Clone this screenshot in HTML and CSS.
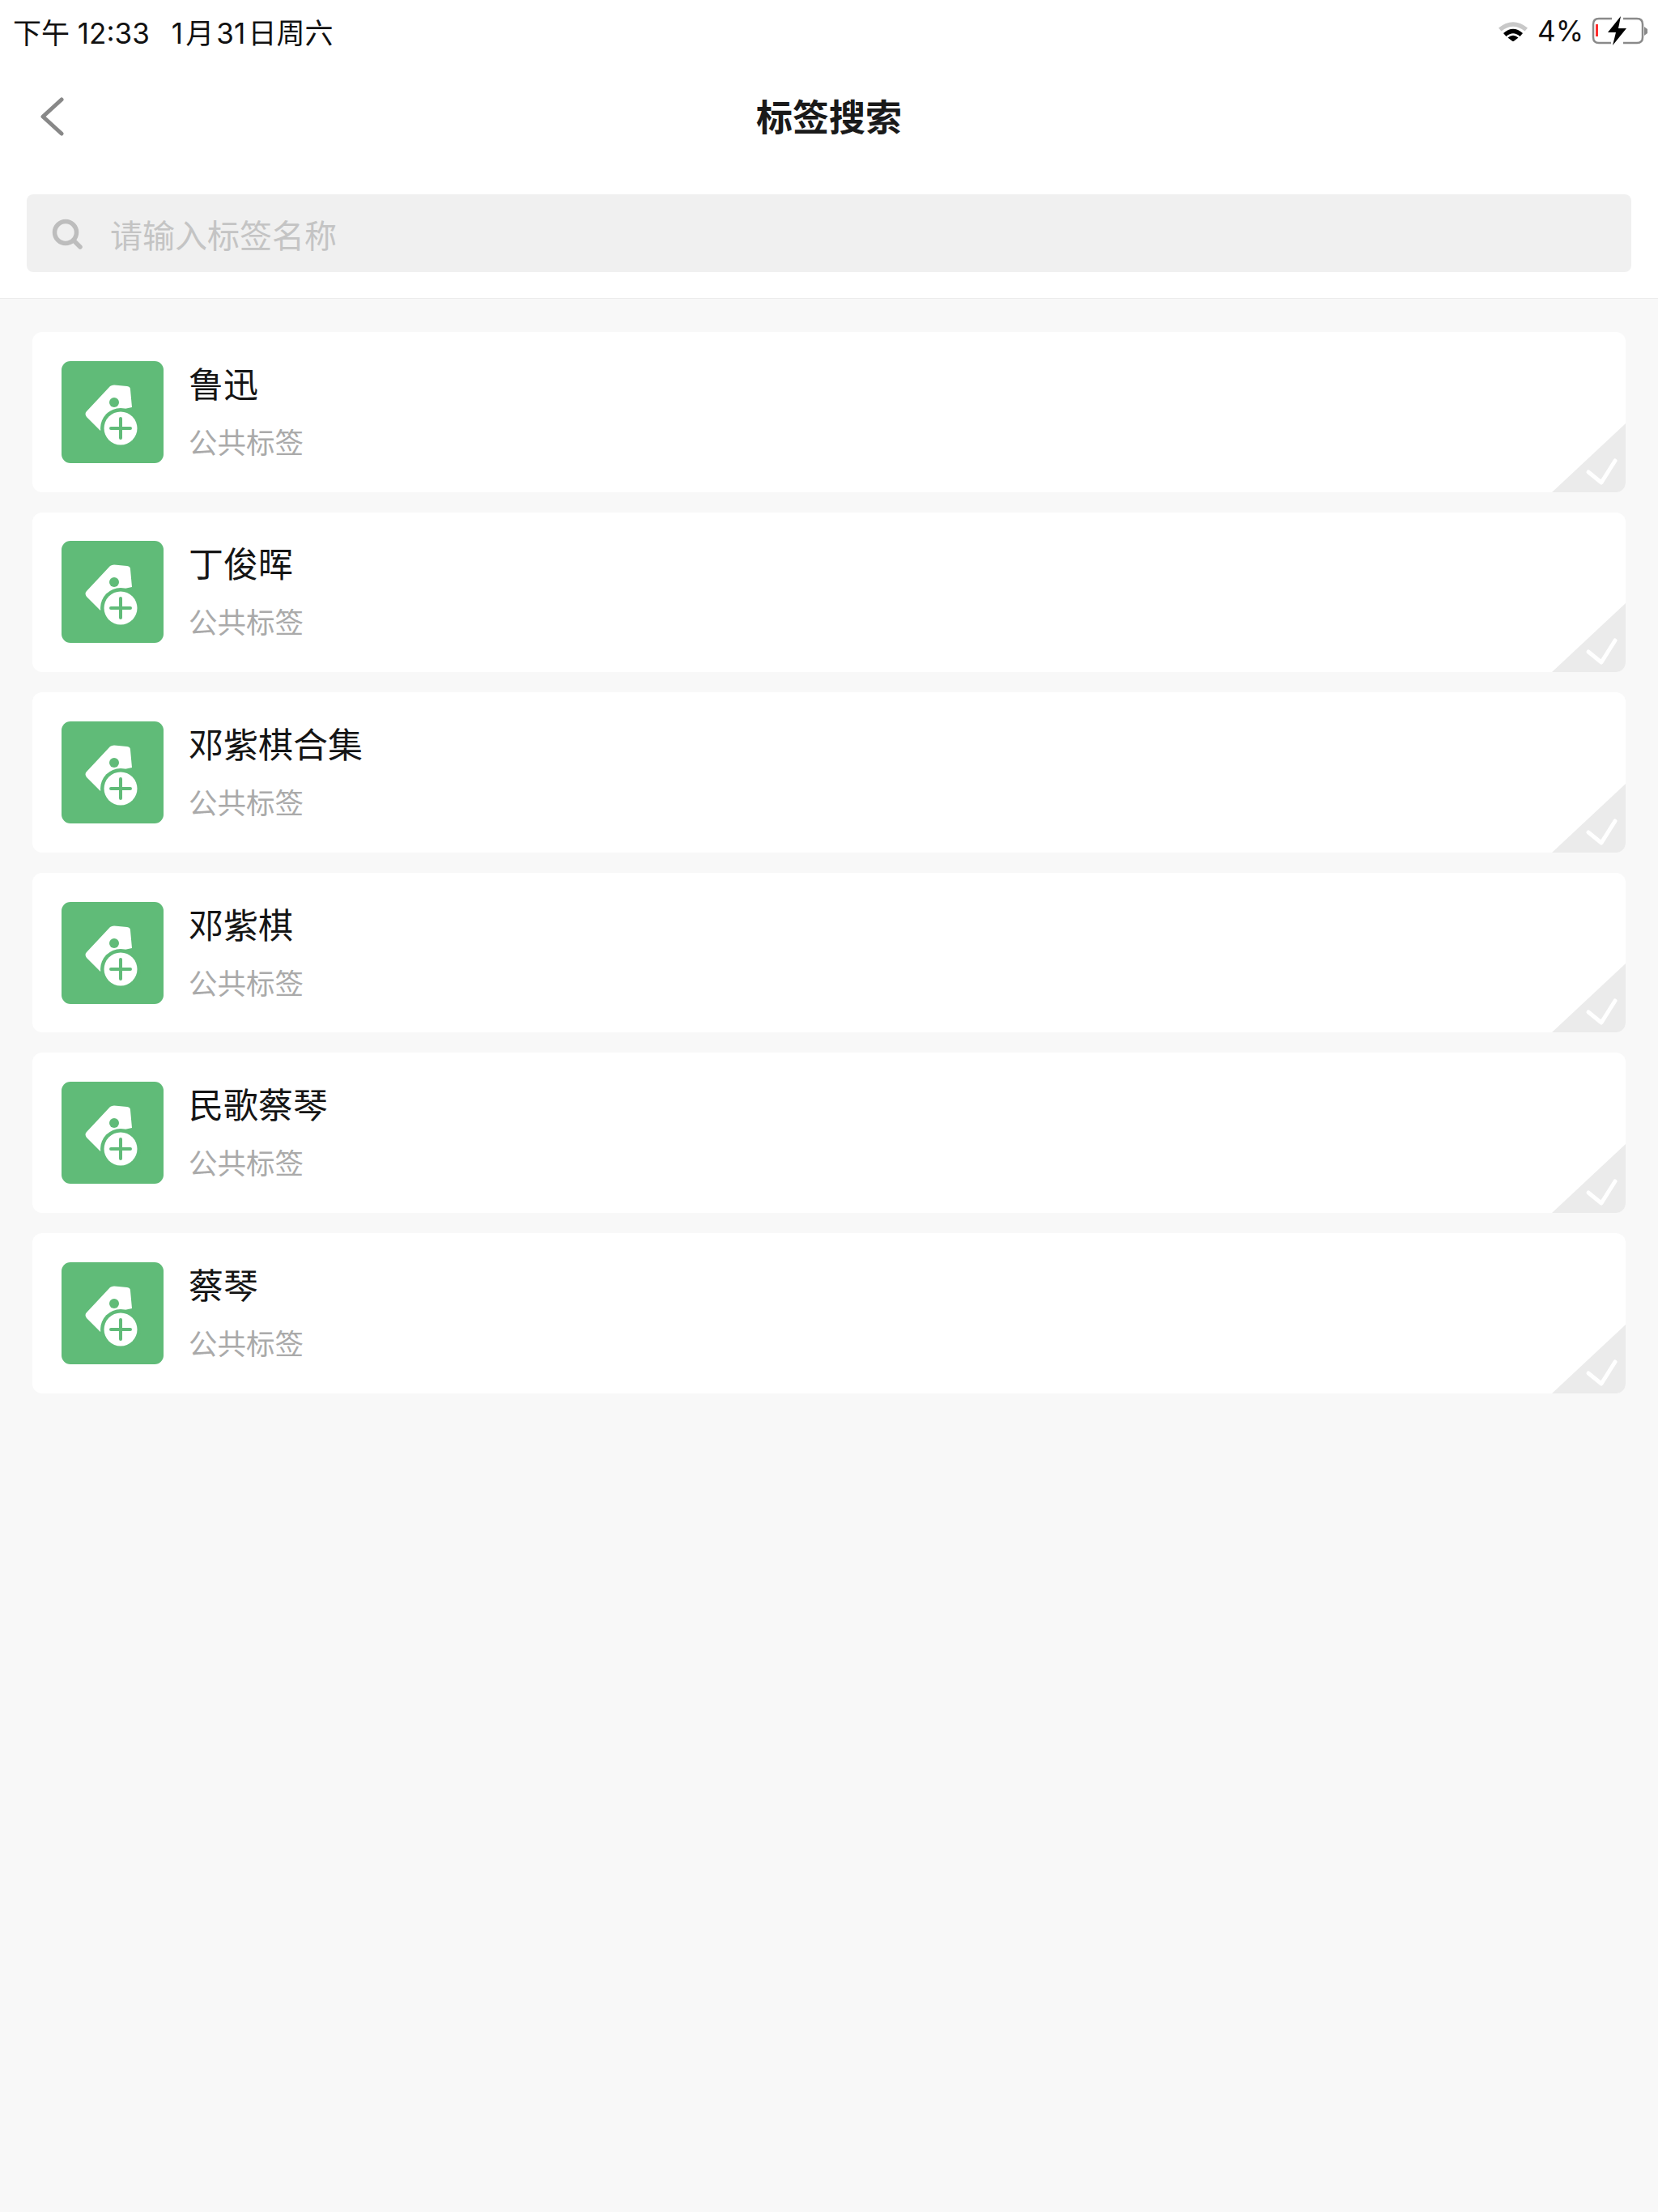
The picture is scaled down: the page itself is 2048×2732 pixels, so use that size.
FILE: index.html
```html
<!DOCTYPE html>
<html lang="zh-CN">
<head>
<meta charset="utf-8">
<title>标签搜索</title>
<link rel="stylesheet" href="styles.css">
</head>
<body>
<svg class="defs" width="0" height="0" aria-hidden="true">
  <symbol id="tag" viewBox="0 0 126 126">
    <rect width="126" height="126" rx="11" fill="#60bb78"/>
    <path d="M60 31Q62 29.500 65 29.500L81 31Q85 31.500 85 35L87 57L73 60L48 86L31 69Q28 65 31 62Z" fill="#fff"/>
    <circle cx="65" cy="51" r="6" fill="#60bb78"/>
    <circle cx="73" cy="83" r="25" fill="#60bb78"/>
    <circle cx="73" cy="83" r="20.500" fill="#fff"/>
    <path d="M61 83H85M73 71V95" stroke="#60bb78" stroke-width="4" stroke-linecap="round" fill="none"/>
  </symbol>
  <symbol id="corner" viewBox="0 0 91 85">
    <path d="M0 85L91 0V85Z" fill="#ebebeb"/>
    <path d="M45 60L61 73L78 46" stroke="#fff" stroke-width="5" stroke-linecap="round" stroke-linejoin="round" fill="none"/>
  </symbol>
</svg>
<div class="page">
  <header class="head">
    <div class="status">
      <div class="status-left"><span>下午 12:33</span><span>1&#x200A;月&#x200A;31&#x200A;日周六</span></div>
      <div class="status-right">
        <svg class="wifi" width="36" height="26" viewBox="0 0 36 26">
          <path d="M0 9.500Q18 -5 36 9.500L32.500 13.500Q18 2 3.500 13.500Z" fill="#c8c8c8"/>
          <path d="M6 16Q18 5.500 30 16L26.500 20Q18 12.500 9.500 20Z" fill="#000"/>
          <path d="M11.500 21.500Q18 16 24.500 21.500L18 26.500Z" fill="#000"/>
        </svg>
        <span class="pct">4%</span>
        <svg class="batt" width="70" height="36" viewBox="0 0 70 36">
          <path d="M25 3H9Q2 3 2 10V26Q2 33 9 33H24M39 3H56Q63 3 63 10V26Q63 33 56 33H39" stroke="#8a8a8a" stroke-width="2.500" fill="none"/>
          <rect x="5" y="10" width="3" height="15" fill="#ff2d2d"/>
          <path d="M65 13L69 16V21L65 24Z" fill="#8a8a8a"/>
          <path d="M36 0L20 20H30L26 36L43 15H33Z" fill="#000"/>
        </svg>
      </div>
    </div>
    <nav class="nav">
      <svg class="back" width="30" height="50" viewBox="0 0 30 50"><path d="M26 3L3 24L26 45" stroke="#888" stroke-width="5" stroke-linecap="round" stroke-linejoin="round" fill="none"/></svg>
      <h1>标签搜索</h1>
    </nav>
    <div class="search">
      <svg class="search-ico" width="40" height="40" viewBox="0 0 40 40"><circle cx="17" cy="17" r="13.500" stroke="#bdbdbd" stroke-width="5.500" fill="none"/><path d="M27 27L35 35" stroke="#bdbdbd" stroke-width="5.500" stroke-linecap="round"/></svg>
      <span class="search-hint">请输入标签名称</span>
    </div>
  </header>
  <main class="list">
    <article class="card"><svg class="ico"><use href="#tag"/></svg><div class="txt"><h2>鲁迅</h2><p>公共标签</p></div><svg class="mark"><use href="#corner"/></svg></article>
    <article class="card"><svg class="ico"><use href="#tag"/></svg><div class="txt"><h2>丁俊晖</h2><p>公共标签</p></div><svg class="mark"><use href="#corner"/></svg></article>
    <article class="card"><svg class="ico"><use href="#tag"/></svg><div class="txt"><h2>邓紫棋合集</h2><p>公共标签</p></div><svg class="mark"><use href="#corner"/></svg></article>
    <article class="card"><svg class="ico"><use href="#tag"/></svg><div class="txt"><h2>邓紫棋</h2><p>公共标签</p></div><svg class="mark"><use href="#corner"/></svg></article>
    <article class="card"><svg class="ico"><use href="#tag"/></svg><div class="txt"><h2>民歌蔡琴</h2><p>公共标签</p></div><svg class="mark"><use href="#corner"/></svg></article>
    <article class="card"><svg class="ico"><use href="#tag"/></svg><div class="txt"><h2>蔡琴</h2><p>公共标签</p></div><svg class="mark"><use href="#corner"/></svg></article>
  </main>
</div>
</body>
</html>
```
FILE: styles.css
```css
* { box-sizing: border-box; }
html, body { margin: 0; padding: 0; }
body { background: #f8f8f8; font-family: "Noto Sans CJK SC", sans-serif; color: #111; }
.defs { position: absolute; }
.page { width: 2048px; height: 2732px; overflow: hidden; }
.head { background: #fff; height: 369px; border-bottom: 1px solid #ececec; display: flex; flex-direction: column; }
.status { height: 80px; padding: 0 12px 4px 16px; display: flex; align-items: center; justify-content: space-between; font-family: Inter, "Noto Sans CJK SC", sans-serif; font-size: 35px; color: #111; }
.status-left { display: flex; gap: 27px; }
.status-right { display: flex; align-items: center; }
.wifi { margin-right: 12px; }
.pct { font-size: 35px; margin-right: 10px; }
.nav { height: 80px; margin-top: 22px; flex: none; display: flex; align-items: center; justify-content: center; position: relative; }
.nav h1 { margin: 0; font-size: 45px; font-weight: 700; color: #1a1a1a; }
.back { position: absolute; left: 50px; top: 18px; }
.search { margin: 58px 33px 0; height: 96px; flex: none; border-radius: 8px; background: #f0f0f0; display: flex; align-items: center; padding-left: 31px; gap: 32px; font-size: 40px; color: #c4c4c4; }
.search-ico { margin-top: 4px; }
.search-hint { padding-top: 2px; }
.list { padding: 41px 40px 0; display: flex; flex-direction: column; gap: 25px; }
.card { position: relative; height: 197.600px; background: #fff; border-radius: 12px; overflow: hidden; display: flex; align-items: center; padding-left: 36px; gap: 31px; }
.ico { width: 126px; height: 126px; flex: none; }
.txt { padding-bottom: 6px; }
.txt h2 { margin: 0; font-size: 43px; line-height: 56px; font-weight: 400; color: #151515; }
.txt p { margin: 22px 0 0; font-size: 35.500px; line-height: 46px; color: #aaa; }
.mark { position: absolute; right: 0; bottom: 0; width: 91px; height: 85px; }
```
